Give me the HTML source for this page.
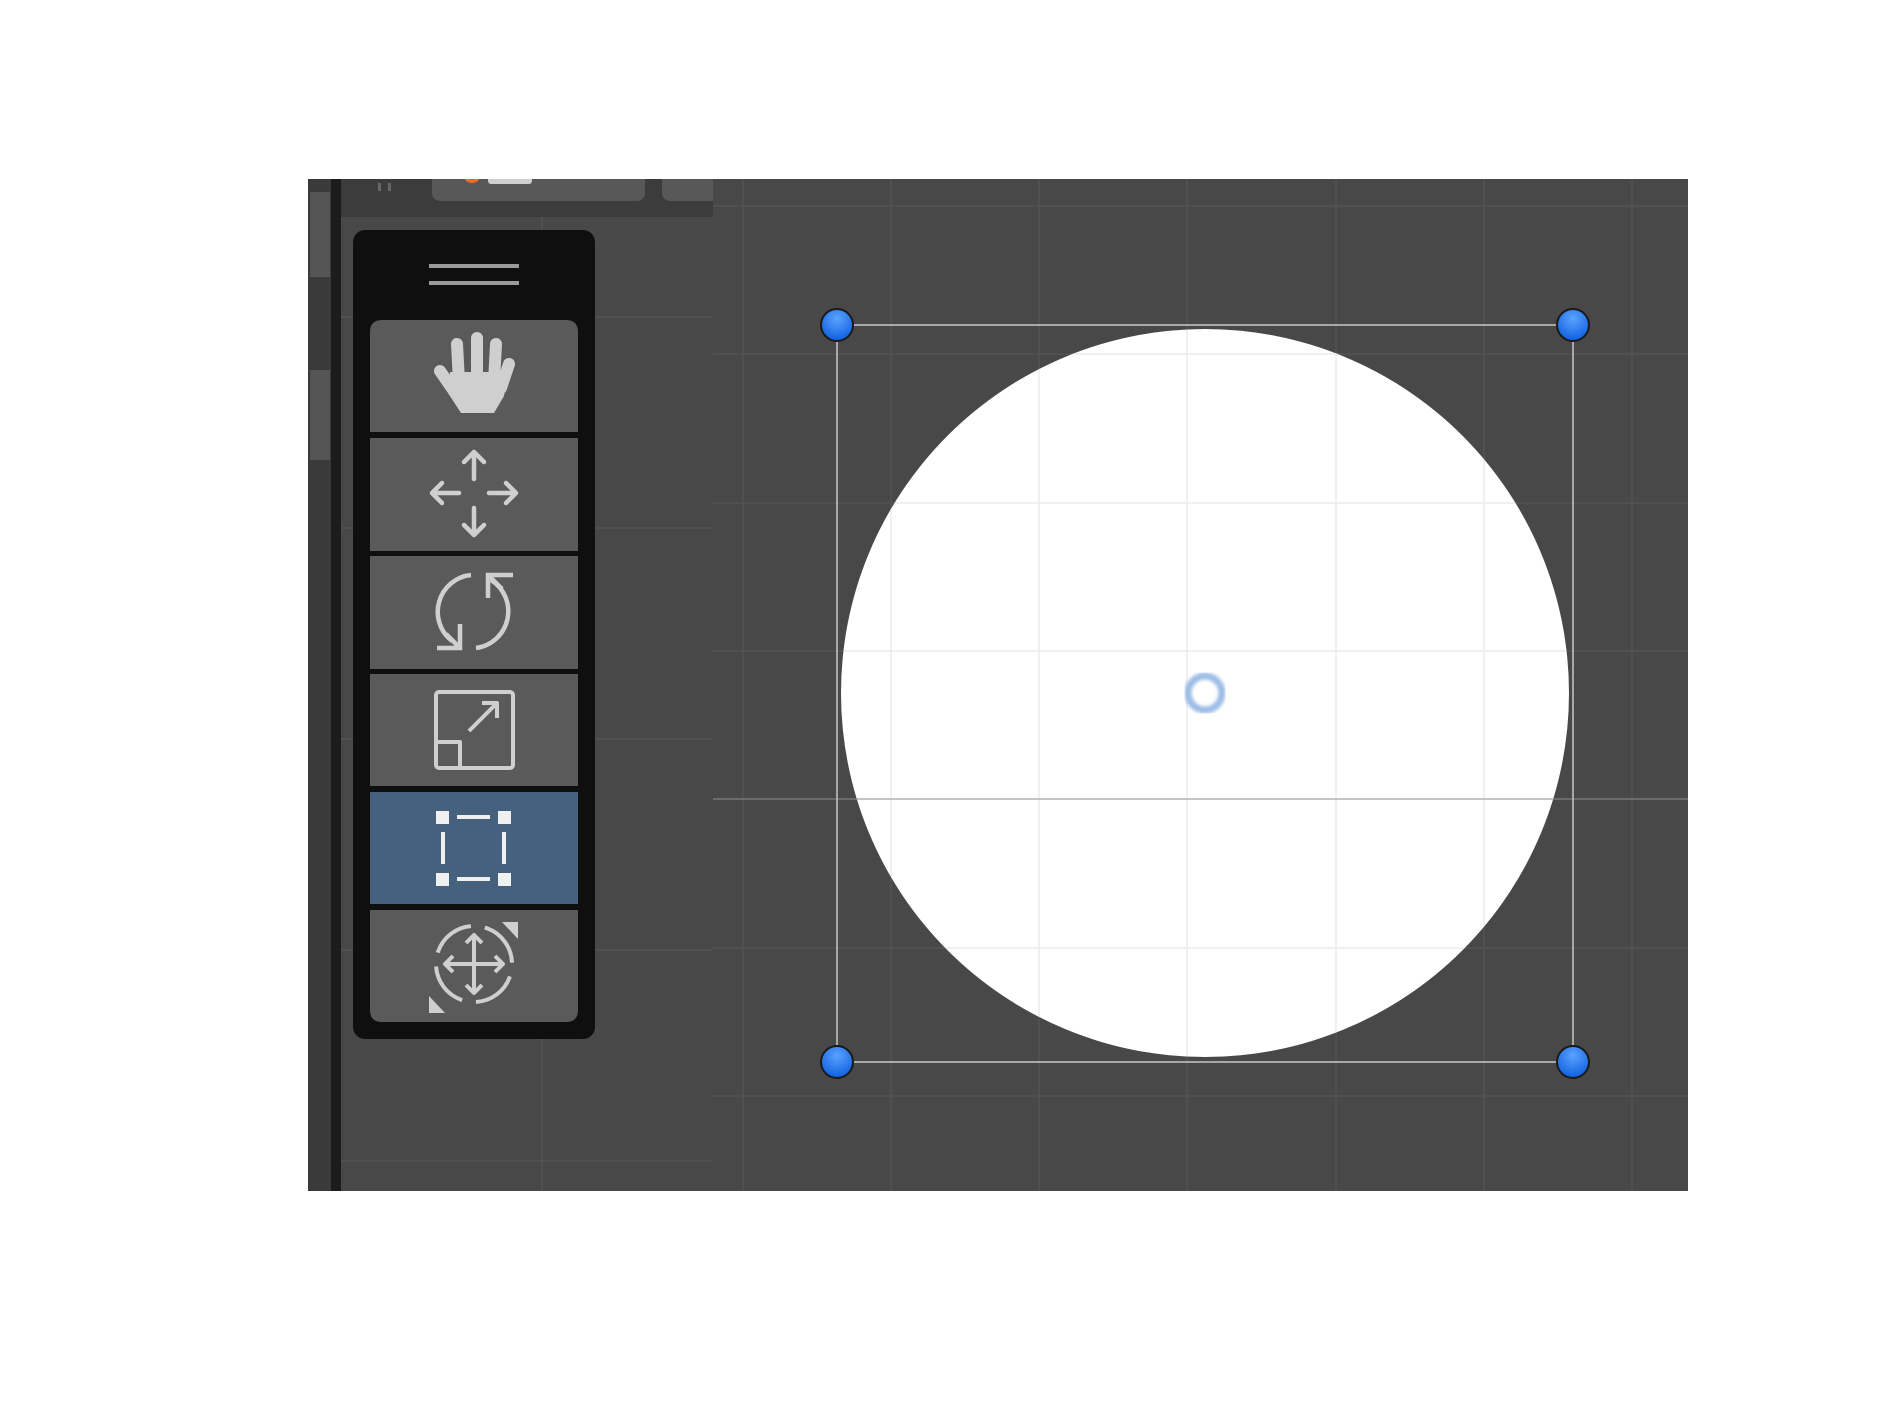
<!DOCTYPE html>
<html><head><meta charset="utf-8"><style>
html,body{margin:0;padding:0;background:#fff;width:1890px;height:1417px;overflow:hidden}
svg{position:absolute;left:0;top:0}
</style></head><body>
<svg width="1890" height="1417" viewBox="0 0 1890 1417">
<defs>
<clipPath id="top"><rect x="308" y="179" width="405" height="1012"/></clipPath>
<clipPath id="circ"><circle cx="1205" cy="693" r="364"/></clipPath>
<radialGradient id="b" cx="0.5" cy="0.3" r="0.7"><stop offset="0" stop-color="#5aa2ff"/><stop offset="1" stop-color="#0e5fe0"/></radialGradient>
<filter id="bl"><feGaussianBlur stdDeviation="1.5"/></filter>
</defs>
<g clip-path="url(#top)">
<rect x="308" y="179" width="405" height="1012" fill="#484848"/>
<g stroke="#525252" stroke-width="1.5">
<line x1="542" y1="217" x2="542" y2="1191"/>
<line x1="341" y1="317" x2="713" y2="317"/>
<line x1="341" y1="528" x2="713" y2="528"/>
<line x1="341" y1="739" x2="713" y2="739"/>
<line x1="341" y1="950" x2="713" y2="950"/>
<line x1="341" y1="1161" x2="713" y2="1161"/>
</g>
<rect x="308" y="179" width="405" height="38" fill="#3c3c3c"/>
<rect x="432" y="165" width="213" height="36" rx="8" fill="#585858"/>
<rect x="662" y="165" width="60" height="36" rx="8" fill="#585858"/>
<circle cx="472" cy="174" r="9" fill="#f26a2a"/>
<rect x="488" y="170" width="44" height="14" rx="3" fill="#d0d0d0"/>
<rect x="378" y="183" width="3" height="8" fill="#666"/><rect x="388" y="183" width="3" height="8" fill="#666"/>
<rect x="308" y="179" width="23" height="1012" fill="#3a3a3a"/>
<rect x="310" y="192" width="20" height="85" fill="#555"/>
<rect x="310" y="370" width="20" height="90" fill="#555"/>
<rect x="331" y="179" width="10" height="1012" fill="#1c1c1c"/>
</g>
<rect x="353" y="230" width="242" height="809" rx="12" fill="#0f0f0f"/>
<rect x="429" y="264" width="90" height="4" fill="#9a9a9a"/>
<rect x="429" y="281" width="90" height="4" fill="#9a9a9a"/>
<path d="M370 332 q0-12 12-12 h184 q12 0 12 12 v100 h-208z" fill="#5a5a5a"/>
<rect x="370" y="438" width="208" height="113" fill="#5a5a5a"/>
<rect x="370" y="556" width="208" height="113" fill="#5a5a5a"/>
<rect x="370" y="674" width="208" height="112" fill="#5a5a5a"/>
<rect x="370" y="792" width="208" height="112" fill="#46617e"/>
<path d="M370 910 h208 v100 q0 12-12 12 h-184 q-12 0-12-12z" fill="#5a5a5a"/>
<g stroke="#cfcfcf" stroke-width="12" stroke-linecap="round" fill="none">
<line x1="457" y1="344" x2="459" y2="382"/>
<line x1="477" y1="338" x2="477" y2="382"/>
<line x1="496" y1="344" x2="494" y2="382"/>
<line x1="509" y1="364" x2="501" y2="388"/>
<line x1="440" y1="371" x2="456" y2="394"/>
</g>
<polygon points="450,372 508,372 504,396 494,413 461,413 448,393" fill="#cfcfcf"/>
<g stroke="#cfcfcf" stroke-width="4.5" stroke-linecap="round" stroke-linejoin="round" fill="none">
<path d="M474 452 v27 M464 462 l10-10 10 10"/>
<path d="M474 508 v27 M464 525 l10 10 10-10"/>
<path d="M432 493 h27 M442 483 l-10 10 10 10"/>
<path d="M489 493 h27 M506 483 l10 10-10 10"/>
</g>
<g stroke="#cfcfcf" stroke-width="4.5" fill="none">
<path d="M471 575 A37 37 0 0 0 452 641"/>
<path d="M460 624 v24 h-23"/>
<path d="M476 648 A37 37 0 0 0 491 580"/>
<path d="M488 598 v-23 h25"/>
<path d="M460 648 l-14 -14"/>
<path d="M488 575 l14 14"/>
</g>
<g stroke="#cfcfcf" stroke-width="4" fill="none" stroke-linejoin="round">
<rect x="436" y="692" width="77" height="76" rx="3"/>
<path d="M436 742 h24 v26"/>
<path d="M469 731 l28-28 M482 703 h15 v15"/>
</g>
<g fill="#f0f0f0">
<rect x="436" y="811" width="13" height="13"/><rect x="498" y="811" width="13" height="13"/>
<rect x="436" y="873" width="13" height="13"/><rect x="498" y="873" width="13" height="13"/>
<rect x="457" y="815" width="33" height="4"/><rect x="457" y="877" width="33" height="4"/>
<rect x="441" y="832" width="4" height="32"/><rect x="502" y="832" width="4" height="32"/>
</g>
<g stroke="#cfcfcf" stroke-width="4" fill="none">
<circle cx="474" cy="964" r="38" stroke-dasharray="45 14" transform="rotate(-70 474 964)"/>
<path d="M474 935 v58 M445 964 h58"/>
<path d="M466 943 l8-8 8 8 M466 985 l8 8 8-8 M453 956 l-8 8 8 8 M495 956 l8 8-8 8" stroke-linejoin="round"/>
</g>
<polygon points="502,922 518,922 518,939" fill="#cfcfcf"/>
<polygon points="429,1013 429,996 445,1013" fill="#cfcfcf"/>
<rect x="713" y="179" width="975" height="1012" fill="#484848"/>
<g stroke="#525252" stroke-width="1.5">
<line x1="743" y1="179" x2="743" y2="1191"/><line x1="891" y1="179" x2="891" y2="1191"/>
<line x1="1039" y1="179" x2="1039" y2="1191"/><line x1="1187" y1="179" x2="1187" y2="1191"/>
<line x1="1336" y1="179" x2="1336" y2="1191"/><line x1="1484" y1="179" x2="1484" y2="1191"/>
<line x1="1632" y1="179" x2="1632" y2="1191"/>
<line x1="713" y1="206" x2="1688" y2="206"/><line x1="713" y1="354" x2="1688" y2="354"/>
<line x1="713" y1="503" x2="1688" y2="503"/><line x1="713" y1="651" x2="1688" y2="651"/>
<line x1="713" y1="948" x2="1688" y2="948"/><line x1="713" y1="1096" x2="1688" y2="1096"/>
</g>
<line x1="713" y1="799" x2="1688" y2="799" stroke="#777" stroke-width="1.5"/>
<circle cx="1205" cy="693" r="364" fill="#fff"/>
<g stroke="#ececec" stroke-width="1.5" clip-path="url(#circ)">
<line x1="891" y1="300" x2="891" y2="1100"/><line x1="1039" y1="300" x2="1039" y2="1100"/>
<line x1="1187" y1="300" x2="1187" y2="1100"/><line x1="1336" y1="300" x2="1336" y2="1100"/>
<line x1="1484" y1="300" x2="1484" y2="1100"/>
<line x1="800" y1="354" x2="1600" y2="354"/><line x1="800" y1="503" x2="1600" y2="503"/>
<line x1="800" y1="651" x2="1600" y2="651"/><line x1="800" y1="948" x2="1600" y2="948"/>
<line x1="800" y1="799" x2="1600" y2="799" stroke="#b0b0b0"/>
</g>
<rect x="837" y="325" width="736" height="737" fill="none" stroke="#c8c8c8" stroke-width="1.5"/>
<circle cx="1205" cy="693" r="17" fill="none" stroke="#9cbde6" stroke-width="7" filter="url(#bl)"/>
<g fill="url(#b)" stroke="#1a1a1a" stroke-width="2">
<circle cx="837" cy="325" r="16"/><circle cx="1573" cy="325" r="16"/>
<circle cx="837" cy="1062" r="16"/><circle cx="1573" cy="1062" r="16"/>
</g>
</svg>
</body></html>
